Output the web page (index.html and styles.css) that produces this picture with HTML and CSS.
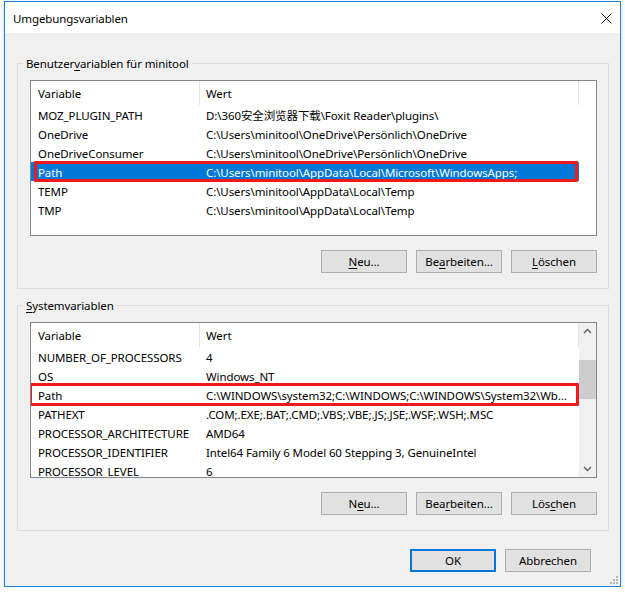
FILE: index.html
```html
<!DOCTYPE html>
<html lang="de">
<head>
    <meta charset="UTF-8">
    <title>Umgebungsvariablen</title>
    <link rel="stylesheet" href="styles.css">
</head>
<body>
    <div class="window">
        <div class="titlebar">
            <span class="title">Umgebungsvariablen</span>
            <svg class="close" width="11" height="11" viewBox="0 0 11 11">
                <path d="M0.5 0.5 L10.5 10.5 M10.5 0.5 L0.5 10.5" stroke="#000" stroke-width="1" fill="none"/>
            </svg>
        </div>
        <div class="client">
            <div class="group">
                <span class="group-label">Benutzer<u>v</u>ariablen für minitool</span>
                <div class="list">
                    <div class="list-body">
                        <div class="list-head">
                            <div class="name">Variable</div>
                            <div class="value">Wert</div>
                        </div>
                        <div class="row"><div class="name">MOZ_PLUGIN_PATH</div><div class="value">D:\360安全浏览器下载\Foxit Reader\plugins\</div></div>
                        <div class="row"><div class="name">OneDrive</div><div class="value">C:\Users\minitool\OneDrive\Persönlich\OneDrive</div></div>
                        <div class="row"><div class="name">OneDriveConsumer</div><div class="value">C:\Users\minitool\OneDrive\Persönlich\OneDrive</div></div>
                        <div class="row selected">
                            <div class="name">Path</div><div class="value">C:\Users\minitool\AppData\Local\Microsoft\WindowsApps;</div>
                            <span class="mark mark-user"></span>
                        </div>
                        <div class="row"><div class="name">TEMP</div><div class="value">C:\Users\minitool\AppData\Local\Temp</div></div>
                        <div class="row"><div class="name">TMP</div><div class="value">C:\Users\minitool\AppData\Local\Temp</div></div>
                    </div>
                    <div class="list-side"></div>
                </div>
                <div class="buttons">
                    <button class="btn"><u>N</u>eu...</button>
                    <button class="btn">Be<u>a</u>rbeiten...</button>
                    <button class="btn"><u>L</u>öschen</button>
                </div>
            </div>

            <div class="group group-system">
                <span class="group-label"><u>S</u>ystemvariablen</span>
                <div class="list">
                    <div class="list-body">
                        <div class="list-head">
                            <div class="name">Variable</div>
                            <div class="value">Wert</div>
                        </div>
                        <div class="row"><div class="name">NUMBER_OF_PROCESSORS</div><div class="value">4</div></div>
                        <div class="row"><div class="name">OS</div><div class="value">Windows_NT</div></div>
                        <div class="row">
                            <div class="name">Path</div><div class="value">C:\WINDOWS\system32;C:\WINDOWS;C:\WINDOWS\System32\Wb...</div>
                            <span class="mark mark-system"></span>
                        </div>
                        <div class="row"><div class="name">PATHEXT</div><div class="value">.COM;.EXE;.BAT;.CMD;.VBS;.VBE;.JS;.JSE;.WSF;.WSH;.MSC</div></div>
                        <div class="row"><div class="name">PROCESSOR_ARCHITECTURE</div><div class="value">AMD64</div></div>
                        <div class="row"><div class="name">PROCESSOR_IDENTIFIER</div><div class="value">Intel64 Family 6 Model 60 Stepping 3, GenuineIntel</div></div>
                        <div class="row"><div class="name">PROCESSOR_LEVEL</div><div class="value">6</div></div>
                    </div>
                    <div class="list-side scrollbar">
                        <svg class="arrow" width="17" height="17" viewBox="0 0 17 17">
                            <path d="M5 10 L8.5 6.5 L12 10" stroke="#606060" stroke-width="1.4" fill="none"/>
                        </svg>
                        <div class="track"><div class="thumb"></div></div>
                        <svg class="arrow" width="17" height="17" viewBox="0 0 17 17">
                            <path d="M5 7 L8.5 10.5 L12 7" stroke="#606060" stroke-width="1.4" fill="none"/>
                        </svg>
                    </div>
                </div>
                <div class="buttons">
                    <button class="btn">N<u>e</u>u...</button>
                    <button class="btn">Bea<u>r</u>beiten...</button>
                    <button class="btn">Lös<u>c</u>hen</button>
                </div>
            </div>

            <div class="dialog-buttons">
                <button class="btn btn-default">OK</button>
                <button class="btn">Abbrechen</button>
            </div>
        </div>
        <svg class="grip" width="9" height="9" viewBox="0 0 9 9">
            <rect x="6" y="0" width="2" height="2" fill="#b8b8b8"/>
            <rect x="3" y="3" width="2" height="2" fill="#b8b8b8"/>
            <rect x="6" y="3" width="2" height="2" fill="#b8b8b8"/>
            <rect x="0" y="6" width="2" height="2" fill="#b8b8b8"/>
            <rect x="3" y="6" width="2" height="2" fill="#b8b8b8"/>
            <rect x="6" y="6" width="2" height="2" fill="#b8b8b8"/>
        </svg>
    </div>
</body>
</html>
```

FILE: styles.css
```css
* { box-sizing: border-box; }
body {
    margin: 0;
    background-color: #fff;
    color: #000;
    font-family: "Noto Sans", "Noto Sans CJK SC", sans-serif;
    font-size: 11.5px;
    letter-spacing: -0.1px;
}
u {
    text-decoration-thickness: 1px;
    text-underline-offset: 2px;
}
.window {
    position: relative;
    margin: 1px 0 0 4px;
    width: 617px;
    height: 586px;
    border: 1px solid #1883d7;
    background-color: #f0f0f0;
    box-shadow: 0 2px 5px rgba(0, 0, 0, 0.18);
    display: flex;
    flex-direction: column;
}
.titlebar {
    flex: none;
    height: 31px;
    background-color: #fff;
    display: flex;
    align-items: center;
    justify-content: space-between;
    padding: 0 8px 0 8px;
}
.title {
    padding-top: 2px;
}
.close {
    margin-top: 2px;
}
.client {
    padding: 30px 11px 0 12px;
}

/* group boxes */
.group {
    position: relative;
    border: 1px solid #dcdcdc;
    padding: 16px 11px 15px 12px;
}
.group-system {
    margin-top: 16px;
}
.group-label {
    position: absolute;
    top: -9px;
    left: 5px;
    padding: 0 3px 0 3px;
    background-color: #f0f0f0;
    line-height: 18px;
}

/* list views */
.list {
    height: 156px;
    border: 1px solid #828790;
    background-color: #fff;
    display: flex;
    overflow: hidden;
}
.list-body {
    width: 548px;
}
.list-side {
    width: 17px;
    background-color: #fff;
}
.list-head {
    display: flex;
    height: 24px;
    line-height: 25px;
}
.list-head .name,
.list-head .value {
    border-right: 1px solid #e5e5e5;
}
.row {
    position: relative;
    display: flex;
    height: 19px;
    padding-top: 2px;
    line-height: 17px;
    white-space: nowrap;
}
.name {
    width: 169px;
    padding-left: 7px;
    border-right: 1px solid transparent;
    overflow: hidden;
}
.value {
    width: 379px;
    padding-left: 6px;
    border-right: 1px solid transparent;
    overflow: hidden;
}
.row.selected {
    background-color: #0078d7;
    color: #fff;
}

/* red annotation boxes */
.mark {
    position: absolute;
    border: 3px solid #f01a1a;
    border-radius: 1px;
}
.mark-user {
    top: -1px;
    bottom: -1px;
    left: 3px;
    right: 1px;
}
.mark-system {
    top: -2px;
    bottom: -2px;
    left: -2px;
    right: 0;
}

/* scrollbar */
.scrollbar {
    background-color: #f0f0f0;
    display: flex;
    flex-direction: column;
}
.arrow {
    flex: none;
}
.track {
    flex: 1;
    padding-top: 20px;
}
.thumb {
    height: 39px;
    background-color: #cdcdcd;
}

/* buttons */
.buttons {
    display: flex;
    justify-content: flex-end;
    gap: 9px;
    margin-top: 14px;
}
.btn {
    width: 86px;
    height: 23px;
    padding: 0;
    background-color: #e1e1e1;
    border: 1px solid #adadad;
    font-family: inherit;
    font-size: 11.5px;
    letter-spacing: -0.1px;
    color: #000;
}
.btn-default {
    border: 2px solid #0078d7;
}
.dialog-buttons {
    display: flex;
    justify-content: flex-end;
    gap: 9px;
    margin-top: 18px;
    padding-right: 18px;
}
.grip {
    position: absolute;
    right: 1px;
    bottom: 1px;
}
```
